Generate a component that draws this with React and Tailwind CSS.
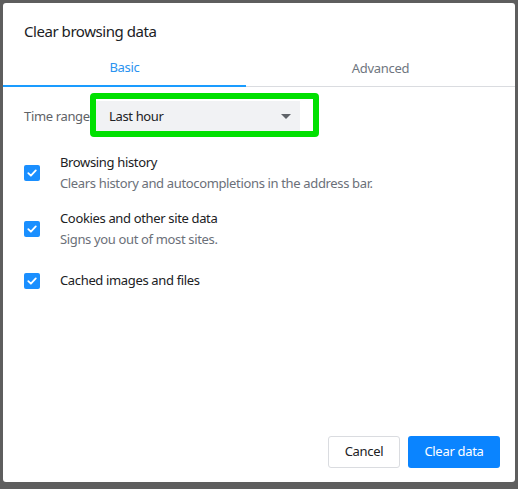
import React from "react";

function Check() {
  return (
    <div className="w-4 h-4 rounded-[2px] bg-[#1a8fff] flex items-center justify-center shrink-0">
      <svg width="12" height="12" viewBox="0 0 12 12" fill="none">
        <path d="M2.3 6.2 L4.9 8.7 L9.8 3.4" stroke="white" strokeWidth="1.8" strokeLinecap="round" strokeLinejoin="round" />
      </svg>
    </div>
  );
}

function Item({ title, desc, className = "" }) {
  return (
    <div className={"flex items-center " + className}>
      <div className="w-9 flex">
        <Check />
      </div>
      <div className="flex flex-col">
        <div className="text-[13px] leading-[21px] text-[#202124] tracking-[-0.35px]">{title}</div>
        {desc && <div className="text-[13px] leading-[21px] text-[#6b7079] tracking-[-0.35px]">{desc}</div>}
      </div>
    </div>
  );
}

export default function App() {
  return (
    <div className="w-[518px] h-[489px] bg-[#5e5e5e] pt-[3px] pl-[3px]" style={{ fontFamily: '"Segoe UI", "Noto Sans", sans-serif' }}>
      <div className="relative w-[512px] h-[479px] bg-white rounded-[3px] flex flex-col">
        <div className="px-[21px] pt-[16px] text-[15px] leading-[24px] text-[#202124] tracking-[-0.45px]">Clear browsing data</div>
        <div className="mt-[10px] flex border-b border-[#dadce0] h-[34px]">
          <div className="w-[243px] flex items-center justify-center text-[13px] text-[#2a93f0] border-b-2 border-[#1a9cff] -mb-px tracking-[-0.3px] pb-[2px]">Basic</div>
          <div className="flex-1 flex items-center justify-center text-[13px] text-[#6f7680] tracking-[-0.3px] pb-[2px]">Advanced</div>
        </div>
        <div className="px-[21px] pt-[14px] flex items-center">
          <div className="text-[13px] text-[#5f6368] w-[72px] tracking-[-0.35px]">Time range</div>
          <div className="w-[204px] h-[32px] bg-[#f1f2f4] flex items-center justify-between pl-[13px] pr-[8px] text-[13px] text-[#202124] tracking-[-0.35px]">
            <span>Last hour</span>
            <svg width="12" height="8" viewBox="0 0 12 8"><path d="M1 1 L11 1 L6 6 Z" fill="#5f6368" /></svg>
          </div>
        </div>
        <div className="px-[21px] pt-[19px] flex flex-col gap-[14px]">
          <Item title="Browsing history" desc="Clears history and autocompletions in the address bar." />
          <Item title="Cookies and other site data" desc="Signs you out of most sites." />
          <Item title="Cached images and files" className="mt-[6px]" />
        </div>
        <div className="mt-auto flex justify-end gap-2 px-[15px] pb-[14px]">
          <button className="h-[32px] w-[72px] rounded-[3px] border border-[#dadce0] text-[13px] text-[#202124] bg-white tracking-[-0.3px]">Cancel</button>
          <button className="h-[32px] w-[92px] rounded-[3px] bg-[#0a84ff] text-[13px] text-white tracking-[-0.3px]">Clear data</button>
        </div>
        <div className="absolute left-[87px] top-[90px] w-[229px] h-[44px] border-[6px] border-[#00e000] rounded-[4px] pointer-events-none" />
      </div>
    </div>
  );
}
